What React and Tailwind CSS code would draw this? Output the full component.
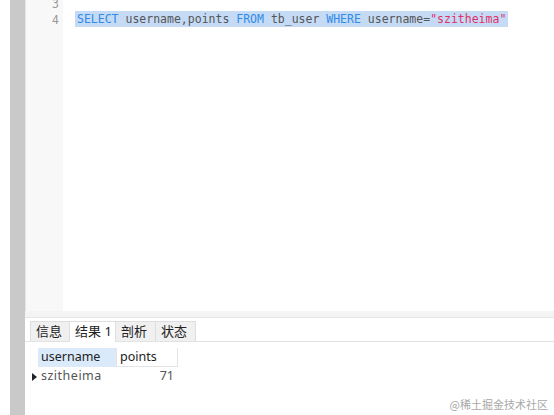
import React from 'react';

const mono = { fontFamily: '"DejaVu Sans Mono", "Liberation Mono", monospace' };

const Tab = ({ label, w, active }) => (
  <div
    className={`${w} h-[20px] pl-[5px] flex items-center text-[13px] text-[#222] border-t border-r border-[#dedede] ${
      active ? 'bg-white -mb-px h-[21px]' : 'bg-[#f0f0f0]'
    }`}
  >
    {label}
  </div>
);

export default function App() {
  return (
    <div
      className="w-[554px] h-[415px] flex bg-white relative overflow-hidden"
      style={{ fontFamily: '"Noto Sans", "Noto Sans CJK SC", sans-serif' }}
    >
      <div className="w-[10px] bg-white" />
      <div className="w-[15px] bg-[#c9c9c9]" />
      <div className="flex-1 flex flex-col">
        {/* editor */}
        <div className="h-[311px] flex overflow-hidden">
          <div className="w-[38px] bg-[#f8f8f8] border-l border-[#e4e4e4] flex flex-col items-end pr-[4px] text-[#999] text-[11.5px] leading-[16px]" style={mono}>
            <div className="mt-[-4px]">3</div>
            <div>4</div>
          </div>
          <div className="flex-1 pl-[12px] pt-[11px] text-[11.5px] leading-[16px]" style={mono}>
            <div className="inline-block bg-[#c5dbf5] px-[2px] whitespace-pre text-[#555]">
              <span className="text-[#2f8ae8]">SELECT</span> username,points <span className="text-[#2f8ae8]">FROM</span> tb_user <span className="text-[#2f8ae8]">WHERE</span> username=<span className="text-[#e0306a]">"szitheima"</span>
            </div>
          </div>
        </div>
        <div className="h-[7px] bg-[#f4f4f4] border-b border-[#e6e6e6]" />
        {/* results panel */}
        <div className="flex-1 bg-white flex flex-col">
          <div className="h-[24px] pt-[4px] pl-[5px] flex items-end border-b border-[#e2e2e2]">
            <Tab label="信息" w="w-[40px] border-l" />
            <Tab label="结果 1" w="w-[46px]" active />
            <Tab label="剖析" w="w-[40px]" />
            <Tab label="状态" w="w-[40px]" />
          </div>
          <div className="pl-[13px] pt-[6px] text-[12.5px] text-[#222]">
            <div className="flex">
              <div className="w-[79px] h-[19px] bg-[#dbeafb] pl-[3px] flex items-center border-r border-[#e4e4e4]">username</div>
              <div className="w-[61px] h-[19px] pl-[3px] flex items-center border-r border-b border-[#e4e4e4]">points</div>
            </div>
            <div className="flex relative">
              <div className="absolute left-[-6px] top-[6px] w-0 h-0 border-y-[4px] border-y-transparent border-l-[5px] border-l-[#222]" />
              <div className="w-[79px] h-[19px] pl-[3px] flex items-center text-[#555] tracking-[0.5px]">szitheima</div>
              <div className="w-[61px] h-[19px] pr-[4px] flex items-center justify-end text-[#555]">71</div>
            </div>
          </div>
        </div>
      </div>
      <div
        className="absolute right-[6px] bottom-[3px] text-[11px] text-[#a8a8a8]"
        style={{ fontFamily: '"Noto Sans CJK SC", sans-serif' }}
      >
        @稀土掘金技术社区
      </div>
    </div>
  );
}
